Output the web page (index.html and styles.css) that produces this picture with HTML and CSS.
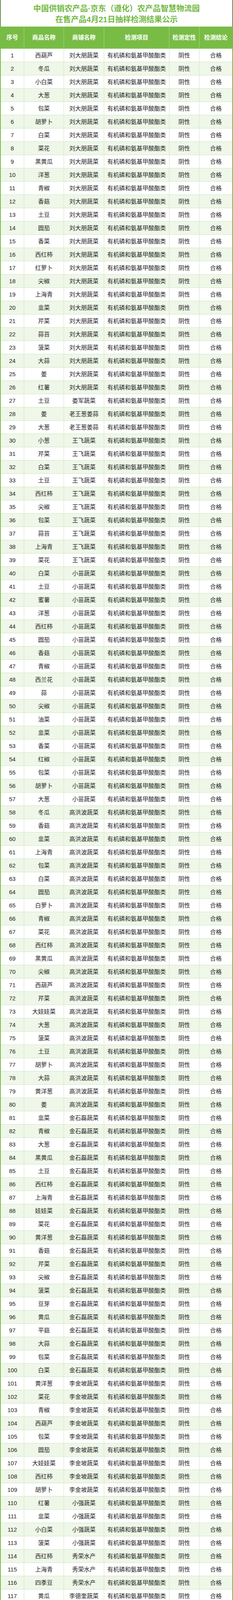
FILE: index.html
```html
<!DOCTYPE html>
<html lang="zh-CN">
<head>
<meta charset="utf-8">
<title>在售产品4月21日抽样检测结果公示</title>
<link rel="stylesheet" href="styles.css">
</head>
<body>
<div class="page">
  <div class="title">
    <div class="title-line">中国供销农产品·京东（遵化）农产品智慧物流园</div>
    <div class="title-line">在售产品4月21日抽样检测结果公示</div>
  </div>
  <div class="table">
    <div class="row head"><div class="c">序号</div><div class="c">商品名称</div><div class="c">商铺名称</div><div class="c">检测项目</div><div class="c">检测定性</div><div class="c">检测结论</div></div>
    <div class="body">
<div class="row"><div class="c">1</div><div class="c">西葫芦</div><div class="c">刘大朋蔬菜</div><div class="c">有机磷和氨基甲酸酯类</div><div class="c">阴性</div><div class="c">合格</div></div>
<div class="row"><div class="c">2</div><div class="c">冬瓜</div><div class="c">刘大朋蔬菜</div><div class="c">有机磷和氨基甲酸酯类</div><div class="c">阴性</div><div class="c">合格</div></div>
<div class="row"><div class="c">3</div><div class="c">小白菜</div><div class="c">刘大朋蔬菜</div><div class="c">有机磷和氨基甲酸酯类</div><div class="c">阴性</div><div class="c">合格</div></div>
<div class="row"><div class="c">4</div><div class="c">大葱</div><div class="c">刘大朋蔬菜</div><div class="c">有机磷和氨基甲酸酯类</div><div class="c">阴性</div><div class="c">合格</div></div>
<div class="row"><div class="c">5</div><div class="c">包菜</div><div class="c">刘大朋蔬菜</div><div class="c">有机磷和氨基甲酸酯类</div><div class="c">阴性</div><div class="c">合格</div></div>
<div class="row"><div class="c">6</div><div class="c">胡萝卜</div><div class="c">刘大朋蔬菜</div><div class="c">有机磷和氨基甲酸酯类</div><div class="c">阴性</div><div class="c">合格</div></div>
<div class="row"><div class="c">7</div><div class="c">白菜</div><div class="c">刘大朋蔬菜</div><div class="c">有机磷和氨基甲酸酯类</div><div class="c">阴性</div><div class="c">合格</div></div>
<div class="row"><div class="c">8</div><div class="c">菜花</div><div class="c">刘大朋蔬菜</div><div class="c">有机磷和氨基甲酸酯类</div><div class="c">阴性</div><div class="c">合格</div></div>
<div class="row"><div class="c">9</div><div class="c">黑黄瓜</div><div class="c">刘大朋蔬菜</div><div class="c">有机磷和氨基甲酸酯类</div><div class="c">阴性</div><div class="c">合格</div></div>
<div class="row"><div class="c">10</div><div class="c">洋葱</div><div class="c">刘大朋蔬菜</div><div class="c">有机磷和氨基甲酸酯类</div><div class="c">阴性</div><div class="c">合格</div></div>
<div class="row"><div class="c">11</div><div class="c">青椒</div><div class="c">刘大朋蔬菜</div><div class="c">有机磷和氨基甲酸酯类</div><div class="c">阴性</div><div class="c">合格</div></div>
<div class="row"><div class="c">12</div><div class="c">香菇</div><div class="c">刘大朋蔬菜</div><div class="c">有机磷和氨基甲酸酯类</div><div class="c">阴性</div><div class="c">合格</div></div>
<div class="row"><div class="c">13</div><div class="c">土豆</div><div class="c">刘大朋蔬菜</div><div class="c">有机磷和氨基甲酸酯类</div><div class="c">阴性</div><div class="c">合格</div></div>
<div class="row"><div class="c">14</div><div class="c">圆茄</div><div class="c">刘大朋蔬菜</div><div class="c">有机磷和氨基甲酸酯类</div><div class="c">阴性</div><div class="c">合格</div></div>
<div class="row"><div class="c">15</div><div class="c">香菜</div><div class="c">刘大朋蔬菜</div><div class="c">有机磷和氨基甲酸酯类</div><div class="c">阴性</div><div class="c">合格</div></div>
<div class="row"><div class="c">16</div><div class="c">西红柿</div><div class="c">刘大朋蔬菜</div><div class="c">有机磷和氨基甲酸酯类</div><div class="c">阴性</div><div class="c">合格</div></div>
<div class="row"><div class="c">17</div><div class="c">红萝卜</div><div class="c">刘大朋蔬菜</div><div class="c">有机磷和氨基甲酸酯类</div><div class="c">阴性</div><div class="c">合格</div></div>
<div class="row"><div class="c">18</div><div class="c">尖椒</div><div class="c">刘大朋蔬菜</div><div class="c">有机磷和氨基甲酸酯类</div><div class="c">阴性</div><div class="c">合格</div></div>
<div class="row"><div class="c">19</div><div class="c">上海青</div><div class="c">刘大朋蔬菜</div><div class="c">有机磷和氨基甲酸酯类</div><div class="c">阴性</div><div class="c">合格</div></div>
<div class="row"><div class="c">20</div><div class="c">韭菜</div><div class="c">刘大朋蔬菜</div><div class="c">有机磷和氨基甲酸酯类</div><div class="c">阴性</div><div class="c">合格</div></div>
<div class="row"><div class="c">21</div><div class="c">芹菜</div><div class="c">刘大朋蔬菜</div><div class="c">有机磷和氨基甲酸酯类</div><div class="c">阴性</div><div class="c">合格</div></div>
<div class="row"><div class="c">22</div><div class="c">蒜苔</div><div class="c">刘大朋蔬菜</div><div class="c">有机磷和氨基甲酸酯类</div><div class="c">阴性</div><div class="c">合格</div></div>
<div class="row"><div class="c">23</div><div class="c">菠菜</div><div class="c">刘大朋蔬菜</div><div class="c">有机磷和氨基甲酸酯类</div><div class="c">阴性</div><div class="c">合格</div></div>
<div class="row"><div class="c">24</div><div class="c">大蒜</div><div class="c">刘大朋蔬菜</div><div class="c">有机磷和氨基甲酸酯类</div><div class="c">阴性</div><div class="c">合格</div></div>
<div class="row"><div class="c">25</div><div class="c">姜</div><div class="c">刘大朋蔬菜</div><div class="c">有机磷和氨基甲酸酯类</div><div class="c">阴性</div><div class="c">合格</div></div>
<div class="row"><div class="c">26</div><div class="c">红薯</div><div class="c">刘大朋蔬菜</div><div class="c">有机磷和氨基甲酸酯类</div><div class="c">阴性</div><div class="c">合格</div></div>
<div class="row"><div class="c">27</div><div class="c">土豆</div><div class="c">娄军蔬菜</div><div class="c">有机磷和氨基甲酸酯类</div><div class="c">阴性</div><div class="c">合格</div></div>
<div class="row"><div class="c">28</div><div class="c">姜</div><div class="c">老王葱姜蒜</div><div class="c">有机磷和氨基甲酸酯类</div><div class="c">阴性</div><div class="c">合格</div></div>
<div class="row"><div class="c">29</div><div class="c">大葱</div><div class="c">老王葱姜蒜</div><div class="c">有机磷和氨基甲酸酯类</div><div class="c">阴性</div><div class="c">合格</div></div>
<div class="row"><div class="c">30</div><div class="c">小葱</div><div class="c">王飞蔬菜</div><div class="c">有机磷和氨基甲酸酯类</div><div class="c">阴性</div><div class="c">合格</div></div>
<div class="row"><div class="c">31</div><div class="c">芹菜</div><div class="c">王飞蔬菜</div><div class="c">有机磷和氨基甲酸酯类</div><div class="c">阴性</div><div class="c">合格</div></div>
<div class="row"><div class="c">32</div><div class="c">白菜</div><div class="c">王飞蔬菜</div><div class="c">有机磷和氨基甲酸酯类</div><div class="c">阴性</div><div class="c">合格</div></div>
<div class="row"><div class="c">33</div><div class="c">土豆</div><div class="c">王飞蔬菜</div><div class="c">有机磷和氨基甲酸酯类</div><div class="c">阴性</div><div class="c">合格</div></div>
<div class="row"><div class="c">34</div><div class="c">西红柿</div><div class="c">王飞蔬菜</div><div class="c">有机磷和氨基甲酸酯类</div><div class="c">阴性</div><div class="c">合格</div></div>
<div class="row"><div class="c">35</div><div class="c">尖椒</div><div class="c">王飞蔬菜</div><div class="c">有机磷和氨基甲酸酯类</div><div class="c">阴性</div><div class="c">合格</div></div>
<div class="row"><div class="c">36</div><div class="c">包菜</div><div class="c">王飞蔬菜</div><div class="c">有机磷和氨基甲酸酯类</div><div class="c">阴性</div><div class="c">合格</div></div>
<div class="row"><div class="c">37</div><div class="c">蒜苔</div><div class="c">王飞蔬菜</div><div class="c">有机磷和氨基甲酸酯类</div><div class="c">阴性</div><div class="c">合格</div></div>
<div class="row"><div class="c">38</div><div class="c">上海青</div><div class="c">王飞蔬菜</div><div class="c">有机磷和氨基甲酸酯类</div><div class="c">阴性</div><div class="c">合格</div></div>
<div class="row"><div class="c">39</div><div class="c">菜花</div><div class="c">王飞蔬菜</div><div class="c">有机磷和氨基甲酸酯类</div><div class="c">阴性</div><div class="c">合格</div></div>
<div class="row"><div class="c">40</div><div class="c">白菜</div><div class="c">小苗蔬菜</div><div class="c">有机磷和氨基甲酸酯类</div><div class="c">阴性</div><div class="c">合格</div></div>
<div class="row"><div class="c">41</div><div class="c">土豆</div><div class="c">小苗蔬菜</div><div class="c">有机磷和氨基甲酸酯类</div><div class="c">阴性</div><div class="c">合格</div></div>
<div class="row"><div class="c">42</div><div class="c">蜜薯</div><div class="c">小苗蔬菜</div><div class="c">有机磷和氨基甲酸酯类</div><div class="c">阴性</div><div class="c">合格</div></div>
<div class="row"><div class="c">43</div><div class="c">洋葱</div><div class="c">小苗蔬菜</div><div class="c">有机磷和氨基甲酸酯类</div><div class="c">阴性</div><div class="c">合格</div></div>
<div class="row"><div class="c">44</div><div class="c">西红柿</div><div class="c">小苗蔬菜</div><div class="c">有机磷和氨基甲酸酯类</div><div class="c">阴性</div><div class="c">合格</div></div>
<div class="row"><div class="c">45</div><div class="c">圆茄</div><div class="c">小苗蔬菜</div><div class="c">有机磷和氨基甲酸酯类</div><div class="c">阴性</div><div class="c">合格</div></div>
<div class="row"><div class="c">46</div><div class="c">香菇</div><div class="c">小苗蔬菜</div><div class="c">有机磷和氨基甲酸酯类</div><div class="c">阴性</div><div class="c">合格</div></div>
<div class="row"><div class="c">47</div><div class="c">青椒</div><div class="c">小苗蔬菜</div><div class="c">有机磷和氨基甲酸酯类</div><div class="c">阴性</div><div class="c">合格</div></div>
<div class="row"><div class="c">48</div><div class="c">西兰花</div><div class="c">小苗蔬菜</div><div class="c">有机磷和氨基甲酸酯类</div><div class="c">阴性</div><div class="c">合格</div></div>
<div class="row"><div class="c">49</div><div class="c">蒜</div><div class="c">小苗蔬菜</div><div class="c">有机磷和氨基甲酸酯类</div><div class="c">阴性</div><div class="c">合格</div></div>
<div class="row"><div class="c">50</div><div class="c">尖椒</div><div class="c">小苗蔬菜</div><div class="c">有机磷和氨基甲酸酯类</div><div class="c">阴性</div><div class="c">合格</div></div>
<div class="row"><div class="c">51</div><div class="c">油菜</div><div class="c">小苗蔬菜</div><div class="c">有机磷和氨基甲酸酯类</div><div class="c">阴性</div><div class="c">合格</div></div>
<div class="row"><div class="c">52</div><div class="c">韭菜</div><div class="c">小苗蔬菜</div><div class="c">有机磷和氨基甲酸酯类</div><div class="c">阴性</div><div class="c">合格</div></div>
<div class="row"><div class="c">53</div><div class="c">香菜</div><div class="c">小苗蔬菜</div><div class="c">有机磷和氨基甲酸酯类</div><div class="c">阴性</div><div class="c">合格</div></div>
<div class="row"><div class="c">54</div><div class="c">红椒</div><div class="c">小苗蔬菜</div><div class="c">有机磷和氨基甲酸酯类</div><div class="c">阴性</div><div class="c">合格</div></div>
<div class="row"><div class="c">55</div><div class="c">包菜</div><div class="c">小苗蔬菜</div><div class="c">有机磷和氨基甲酸酯类</div><div class="c">阴性</div><div class="c">合格</div></div>
<div class="row"><div class="c">56</div><div class="c">胡萝卜</div><div class="c">小苗蔬菜</div><div class="c">有机磷和氨基甲酸酯类</div><div class="c">阴性</div><div class="c">合格</div></div>
<div class="row"><div class="c">57</div><div class="c">大葱</div><div class="c">小苗蔬菜</div><div class="c">有机磷和氨基甲酸酯类</div><div class="c">阴性</div><div class="c">合格</div></div>
<div class="row"><div class="c">58</div><div class="c">冬瓜</div><div class="c">高洪波蔬菜</div><div class="c">有机磷和氨基甲酸酯类</div><div class="c">阴性</div><div class="c">合格</div></div>
<div class="row"><div class="c">59</div><div class="c">香菇</div><div class="c">高洪波蔬菜</div><div class="c">有机磷和氨基甲酸酯类</div><div class="c">阴性</div><div class="c">合格</div></div>
<div class="row"><div class="c">60</div><div class="c">韭菜</div><div class="c">高洪波蔬菜</div><div class="c">有机磷和氨基甲酸酯类</div><div class="c">阴性</div><div class="c">合格</div></div>
<div class="row"><div class="c">61</div><div class="c">上海青</div><div class="c">高洪波蔬菜</div><div class="c">有机磷和氨基甲酸酯类</div><div class="c">阴性</div><div class="c">合格</div></div>
<div class="row"><div class="c">62</div><div class="c">包菜</div><div class="c">高洪波蔬菜</div><div class="c">有机磷和氨基甲酸酯类</div><div class="c">阴性</div><div class="c">合格</div></div>
<div class="row"><div class="c">63</div><div class="c">白菜</div><div class="c">高洪波蔬菜</div><div class="c">有机磷和氨基甲酸酯类</div><div class="c">阴性</div><div class="c">合格</div></div>
<div class="row"><div class="c">64</div><div class="c">圆茄</div><div class="c">高洪波蔬菜</div><div class="c">有机磷和氨基甲酸酯类</div><div class="c">阴性</div><div class="c">合格</div></div>
<div class="row"><div class="c">65</div><div class="c">白萝卜</div><div class="c">高洪波蔬菜</div><div class="c">有机磷和氨基甲酸酯类</div><div class="c">阴性</div><div class="c">合格</div></div>
<div class="row"><div class="c">66</div><div class="c">青椒</div><div class="c">高洪波蔬菜</div><div class="c">有机磷和氨基甲酸酯类</div><div class="c">阴性</div><div class="c">合格</div></div>
<div class="row"><div class="c">67</div><div class="c">菜花</div><div class="c">高洪波蔬菜</div><div class="c">有机磷和氨基甲酸酯类</div><div class="c">阴性</div><div class="c">合格</div></div>
<div class="row"><div class="c">68</div><div class="c">西红柿</div><div class="c">高洪波蔬菜</div><div class="c">有机磷和氨基甲酸酯类</div><div class="c">阴性</div><div class="c">合格</div></div>
<div class="row"><div class="c">69</div><div class="c">黑黄瓜</div><div class="c">高洪波蔬菜</div><div class="c">有机磷和氨基甲酸酯类</div><div class="c">阴性</div><div class="c">合格</div></div>
<div class="row"><div class="c">70</div><div class="c">尖椒</div><div class="c">高洪波蔬菜</div><div class="c">有机磷和氨基甲酸酯类</div><div class="c">阴性</div><div class="c">合格</div></div>
<div class="row"><div class="c">71</div><div class="c">西葫芦</div><div class="c">高洪波蔬菜</div><div class="c">有机磷和氨基甲酸酯类</div><div class="c">阴性</div><div class="c">合格</div></div>
<div class="row"><div class="c">72</div><div class="c">芹菜</div><div class="c">高洪波蔬菜</div><div class="c">有机磷和氨基甲酸酯类</div><div class="c">阴性</div><div class="c">合格</div></div>
<div class="row"><div class="c">73</div><div class="c">大娃娃菜</div><div class="c">高洪波蔬菜</div><div class="c">有机磷和氨基甲酸酯类</div><div class="c">阴性</div><div class="c">合格</div></div>
<div class="row"><div class="c">74</div><div class="c">大葱</div><div class="c">高洪波蔬菜</div><div class="c">有机磷和氨基甲酸酯类</div><div class="c">阴性</div><div class="c">合格</div></div>
<div class="row"><div class="c">75</div><div class="c">菠菜</div><div class="c">高洪波蔬菜</div><div class="c">有机磷和氨基甲酸酯类</div><div class="c">阴性</div><div class="c">合格</div></div>
<div class="row"><div class="c">76</div><div class="c">土豆</div><div class="c">高洪波蔬菜</div><div class="c">有机磷和氨基甲酸酯类</div><div class="c">阴性</div><div class="c">合格</div></div>
<div class="row"><div class="c">77</div><div class="c">胡萝卜</div><div class="c">高洪波蔬菜</div><div class="c">有机磷和氨基甲酸酯类</div><div class="c">阴性</div><div class="c">合格</div></div>
<div class="row"><div class="c">78</div><div class="c">大蒜</div><div class="c">高洪波蔬菜</div><div class="c">有机磷和氨基甲酸酯类</div><div class="c">阴性</div><div class="c">合格</div></div>
<div class="row"><div class="c">79</div><div class="c">黄洋葱</div><div class="c">高洪波蔬菜</div><div class="c">有机磷和氨基甲酸酯类</div><div class="c">阴性</div><div class="c">合格</div></div>
<div class="row"><div class="c">80</div><div class="c">姜</div><div class="c">高洪波蔬菜</div><div class="c">有机磷和氨基甲酸酯类</div><div class="c">阴性</div><div class="c">合格</div></div>
<div class="row"><div class="c">81</div><div class="c">韭菜</div><div class="c">金石磊蔬菜</div><div class="c">有机磷和氨基甲酸酯类</div><div class="c">阴性</div><div class="c">合格</div></div>
<div class="row"><div class="c">82</div><div class="c">青椒</div><div class="c">金石磊蔬菜</div><div class="c">有机磷和氨基甲酸酯类</div><div class="c">阴性</div><div class="c">合格</div></div>
<div class="row"><div class="c">83</div><div class="c">大葱</div><div class="c">金石磊蔬菜</div><div class="c">有机磷和氨基甲酸酯类</div><div class="c">阴性</div><div class="c">合格</div></div>
<div class="row"><div class="c">84</div><div class="c">黑黄瓜</div><div class="c">金石磊蔬菜</div><div class="c">有机磷和氨基甲酸酯类</div><div class="c">阴性</div><div class="c">合格</div></div>
<div class="row"><div class="c">85</div><div class="c">土豆</div><div class="c">金石磊蔬菜</div><div class="c">有机磷和氨基甲酸酯类</div><div class="c">阴性</div><div class="c">合格</div></div>
<div class="row"><div class="c">86</div><div class="c">西红柿</div><div class="c">金石磊蔬菜</div><div class="c">有机磷和氨基甲酸酯类</div><div class="c">阴性</div><div class="c">合格</div></div>
<div class="row"><div class="c">87</div><div class="c">上海青</div><div class="c">金石磊蔬菜</div><div class="c">有机磷和氨基甲酸酯类</div><div class="c">阴性</div><div class="c">合格</div></div>
<div class="row"><div class="c">88</div><div class="c">娃娃菜</div><div class="c">金石磊蔬菜</div><div class="c">有机磷和氨基甲酸酯类</div><div class="c">阴性</div><div class="c">合格</div></div>
<div class="row"><div class="c">89</div><div class="c">菜花</div><div class="c">金石磊蔬菜</div><div class="c">有机磷和氨基甲酸酯类</div><div class="c">阴性</div><div class="c">合格</div></div>
<div class="row"><div class="c">90</div><div class="c">黄洋葱</div><div class="c">金石磊蔬菜</div><div class="c">有机磷和氨基甲酸酯类</div><div class="c">阴性</div><div class="c">合格</div></div>
<div class="row"><div class="c">91</div><div class="c">香菇</div><div class="c">金石磊蔬菜</div><div class="c">有机磷和氨基甲酸酯类</div><div class="c">阴性</div><div class="c">合格</div></div>
<div class="row"><div class="c">92</div><div class="c">芹菜</div><div class="c">金石磊蔬菜</div><div class="c">有机磷和氨基甲酸酯类</div><div class="c">阴性</div><div class="c">合格</div></div>
<div class="row"><div class="c">93</div><div class="c">尖椒</div><div class="c">金石磊蔬菜</div><div class="c">有机磷和氨基甲酸酯类</div><div class="c">阴性</div><div class="c">合格</div></div>
<div class="row"><div class="c">94</div><div class="c">菠菜</div><div class="c">金石磊蔬菜</div><div class="c">有机磷和氨基甲酸酯类</div><div class="c">阴性</div><div class="c">合格</div></div>
<div class="row"><div class="c">95</div><div class="c">豆芽</div><div class="c">金石磊蔬菜</div><div class="c">有机磷和氨基甲酸酯类</div><div class="c">阴性</div><div class="c">合格</div></div>
<div class="row"><div class="c">96</div><div class="c">黄瓜</div><div class="c">金石磊蔬菜</div><div class="c">有机磷和氨基甲酸酯类</div><div class="c">阴性</div><div class="c">合格</div></div>
<div class="row"><div class="c">97</div><div class="c">平菇</div><div class="c">金石磊蔬菜</div><div class="c">有机磷和氨基甲酸酯类</div><div class="c">阴性</div><div class="c">合格</div></div>
<div class="row"><div class="c">98</div><div class="c">大蒜</div><div class="c">金石磊蔬菜</div><div class="c">有机磷和氨基甲酸酯类</div><div class="c">阴性</div><div class="c">合格</div></div>
<div class="row"><div class="c">99</div><div class="c">包菜</div><div class="c">金石磊蔬菜</div><div class="c">有机磷和氨基甲酸酯类</div><div class="c">阴性</div><div class="c">合格</div></div>
<div class="row"><div class="c">100</div><div class="c">白菜</div><div class="c">金石磊蔬菜</div><div class="c">有机磷和氨基甲酸酯类</div><div class="c">阴性</div><div class="c">合格</div></div>
<div class="row"><div class="c">101</div><div class="c">黄洋葱</div><div class="c">李金坡蔬菜</div><div class="c">有机磷和氨基甲酸酯类</div><div class="c">阴性</div><div class="c">合格</div></div>
<div class="row"><div class="c">102</div><div class="c">菜花</div><div class="c">李金坡蔬菜</div><div class="c">有机磷和氨基甲酸酯类</div><div class="c">阴性</div><div class="c">合格</div></div>
<div class="row"><div class="c">103</div><div class="c">青椒</div><div class="c">李金坡蔬菜</div><div class="c">有机磷和氨基甲酸酯类</div><div class="c">阴性</div><div class="c">合格</div></div>
<div class="row"><div class="c">104</div><div class="c">西葫芦</div><div class="c">李金坡蔬菜</div><div class="c">有机磷和氨基甲酸酯类</div><div class="c">阴性</div><div class="c">合格</div></div>
<div class="row"><div class="c">105</div><div class="c">包菜</div><div class="c">李金坡蔬菜</div><div class="c">有机磷和氨基甲酸酯类</div><div class="c">阴性</div><div class="c">合格</div></div>
<div class="row"><div class="c">106</div><div class="c">圆茄</div><div class="c">李金坡蔬菜</div><div class="c">有机磷和氨基甲酸酯类</div><div class="c">阴性</div><div class="c">合格</div></div>
<div class="row"><div class="c">107</div><div class="c">大娃娃菜</div><div class="c">李金坡蔬菜</div><div class="c">有机磷和氨基甲酸酯类</div><div class="c">阴性</div><div class="c">合格</div></div>
<div class="row"><div class="c">108</div><div class="c">西红柿</div><div class="c">李金坡蔬菜</div><div class="c">有机磷和氨基甲酸酯类</div><div class="c">阴性</div><div class="c">合格</div></div>
<div class="row"><div class="c">109</div><div class="c">胡萝卜</div><div class="c">李金坡蔬菜</div><div class="c">有机磷和氨基甲酸酯类</div><div class="c">阴性</div><div class="c">合格</div></div>
<div class="row"><div class="c">110</div><div class="c">红薯</div><div class="c">小强蔬菜</div><div class="c">有机磷和氨基甲酸酯类</div><div class="c">阴性</div><div class="c">合格</div></div>
<div class="row"><div class="c">111</div><div class="c">韭菜</div><div class="c">小强蔬菜</div><div class="c">有机磷和氨基甲酸酯类</div><div class="c">阴性</div><div class="c">合格</div></div>
<div class="row"><div class="c">112</div><div class="c">小白菜</div><div class="c">小强蔬菜</div><div class="c">有机磷和氨基甲酸酯类</div><div class="c">阴性</div><div class="c">合格</div></div>
<div class="row"><div class="c">113</div><div class="c">菠菜</div><div class="c">小强蔬菜</div><div class="c">有机磷和氨基甲酸酯类</div><div class="c">阴性</div><div class="c">合格</div></div>
<div class="row"><div class="c">114</div><div class="c">西红柿</div><div class="c">秀荣水产</div><div class="c">有机磷和氨基甲酸酯类</div><div class="c">阴性</div><div class="c">合格</div></div>
<div class="row"><div class="c">115</div><div class="c">上海青</div><div class="c">秀荣水产</div><div class="c">有机磷和氨基甲酸酯类</div><div class="c">阴性</div><div class="c">合格</div></div>
<div class="row"><div class="c">116</div><div class="c">四季豆</div><div class="c">秀荣水产</div><div class="c">有机磷和氨基甲酸酯类</div><div class="c">阴性</div><div class="c">合格</div></div>
<div class="row"><div class="c">117</div><div class="c">黄瓜</div><div class="c">李德奎蔬菜</div><div class="c">有机磷和氨基甲酸酯类</div><div class="c">阴性</div><div class="c">合格</div></div>
<div class="row"><div class="c">118</div><div class="c">雪花梨</div><div class="c">宏伟水果</div><div class="c">有机磷和氨基甲酸酯类</div><div class="c">阴性</div><div class="c">合格</div></div>
<div class="row"><div class="c">119</div><div class="c">香蕉</div><div class="c">宏伟水果</div><div class="c">有机磷和氨基甲酸酯类</div><div class="c">阴性</div><div class="c">合格</div></div>
<div class="row"><div class="c">120</div><div class="c">沃柑</div><div class="c">宏伟水果</div><div class="c">有机磷和氨基甲酸酯类</div><div class="c">阴性</div><div class="c">合格</div></div>
<div class="row"><div class="c">121</div><div class="c">苹果</div><div class="c">徐长月水果</div><div class="c">有机磷和氨基甲酸酯类</div><div class="c">阴性</div><div class="c">合格</div></div>
<div class="row"><div class="c">122</div><div class="c">香蕉</div><div class="c">徐长月水果</div><div class="c">有机磷和氨基甲酸酯类</div><div class="c">阴性</div><div class="c">合格</div></div>
<div class="row"><div class="c">123</div><div class="c">沃柑</div><div class="c">徐长月水果</div><div class="c">有机磷和氨基甲酸酯类</div><div class="c">阴性</div><div class="c">合格</div></div>
<div class="row"><div class="c">124</div><div class="c">花盖梨</div><div class="c">徐长月水果</div><div class="c">有机磷和氨基甲酸酯类</div><div class="c">阴性</div><div class="c">合格</div></div>
<div class="row"><div class="c">125</div><div class="c">草莓</div><div class="c">徐长月水果</div><div class="c">有机磷和氨基甲酸酯类</div><div class="c">阴性</div><div class="c">合格</div></div>
<div class="row"><div class="c">126</div><div class="c">黄柿子</div><div class="c">徐长月水果</div><div class="c">有机磷和氨基甲酸酯类</div><div class="c">阴性</div><div class="c">合格</div></div>
<div class="row"><div class="c">127</div><div class="c">白菜</div><div class="c">小云蔬菜</div><div class="c">有机磷和氨基甲酸酯类</div><div class="c">阴性</div><div class="c">合格</div></div>
<div class="row"><div class="c">128</div><div class="c">菜花</div><div class="c">小云蔬菜</div><div class="c">有机磷和氨基甲酸酯类</div><div class="c">阴性</div><div class="c">合格</div></div>
<div class="row"><div class="c">129</div><div class="c">红萝卜</div><div class="c">小云蔬菜</div><div class="c">有机磷和氨基甲酸酯类</div><div class="c">阴性</div><div class="c">合格</div></div>
<div class="row"><div class="c">130</div><div class="c">菠菜</div><div class="c">小云蔬菜</div><div class="c">有机磷和氨基甲酸酯类</div><div class="c">阴性</div><div class="c">合格</div></div>
<div class="row"><div class="c">131</div><div class="c">黑黄瓜</div><div class="c">小云蔬菜</div><div class="c">有机磷和氨基甲酸酯类</div><div class="c">阴性</div><div class="c">合格</div></div>
<div class="row"><div class="c">132</div><div class="c">黄洋葱</div><div class="c">小云蔬菜</div><div class="c">有机磷和氨基甲酸酯类</div><div class="c">阴性</div><div class="c">合格</div></div>
<div class="row"><div class="c">133</div><div class="c">红薯</div><div class="c">小云蔬菜</div><div class="c">有机磷和氨基甲酸酯类</div><div class="c">阴性</div><div class="c">合格</div></div>
<div class="row"><div class="c">134</div><div class="c">西葫芦</div><div class="c">小云蔬菜</div><div class="c">有机磷和氨基甲酸酯类</div><div class="c">阴性</div><div class="c">合格</div></div>
<div class="row"><div class="c">135</div><div class="c">香菇</div><div class="c">小云蔬菜</div><div class="c">有机磷和氨基甲酸酯类</div><div class="c">阴性</div><div class="c">合格</div></div>
<div class="row"><div class="c">136</div><div class="c">尖椒</div><div class="c">小云蔬菜</div><div class="c">有机磷和氨基甲酸酯类</div><div class="c">阴性</div><div class="c">合格</div></div>
<div class="row"><div class="c">137</div><div class="c">西红柿</div><div class="c">小云蔬菜</div><div class="c">有机磷和氨基甲酸酯类</div><div class="c">阴性</div><div class="c">合格</div></div>
<div class="row"><div class="c">138</div><div class="c">青椒</div><div class="c">小云蔬菜</div><div class="c">有机磷和氨基甲酸酯类</div><div class="c">阴性</div><div class="c">合格</div></div>
<div class="row"><div class="c">139</div><div class="c">胡萝卜</div><div class="c">小云蔬菜</div><div class="c">有机磷和氨基甲酸酯类</div><div class="c">阴性</div><div class="c">合格</div></div>
<div class="row"><div class="c">140</div><div class="c">大葱</div><div class="c">小云蔬菜</div><div class="c">有机磷和氨基甲酸酯类</div><div class="c">阴性</div><div class="c">合格</div></div>
<div class="row"><div class="c">141</div><div class="c">冬瓜</div><div class="c">小云蔬菜</div><div class="c">有机磷和氨基甲酸酯类</div><div class="c">阴性</div><div class="c">合格</div></div>
<div class="row"><div class="c">142</div><div class="c">大娃娃菜</div><div class="c">小云蔬菜</div><div class="c">有机磷和氨基甲酸酯类</div><div class="c">阴性</div><div class="c">合格</div></div>
<div class="row"><div class="c">143</div><div class="c">大蒜</div><div class="c">小云蔬菜</div><div class="c">有机磷和氨基甲酸酯类</div><div class="c">阴性</div><div class="c">合格</div></div>
<div class="row"><div class="c">144</div><div class="c">上海青</div><div class="c">小云蔬菜</div><div class="c">有机磷和氨基甲酸酯类</div><div class="c">阴性</div><div class="c">合格</div></div>
<div class="row"><div class="c">145</div><div class="c">包菜</div><div class="c">小云蔬菜</div><div class="c">有机磷和氨基甲酸酯类</div><div class="c">阴性</div><div class="c">合格</div></div>
<div class="row"><div class="c">146</div><div class="c">豆芽</div><div class="c">小云蔬菜</div><div class="c">有机磷和氨基甲酸酯类</div><div class="c">阴性</div><div class="c">合格</div></div>
<div class="row"><div class="c">147</div><div class="c">姜</div><div class="c">小云蔬菜</div><div class="c">有机磷和氨基甲酸酯类</div><div class="c">阴性</div><div class="c">合格</div></div>
<div class="row"><div class="c">148</div><div class="c">蒜苔</div><div class="c">小云蔬菜</div><div class="c">有机磷和氨基甲酸酯类</div><div class="c">阴性</div><div class="c">合格</div></div>
<div class="row"><div class="c">149</div><div class="c">土豆</div><div class="c">小云蔬菜</div><div class="c">有机磷和氨基甲酸酯类</div><div class="c">阴性</div><div class="c">合格</div></div>
<div class="row"><div class="c">150</div><div class="c">芹菜</div><div class="c">小云蔬菜</div><div class="c">有机磷和氨基甲酸酯类</div><div class="c">阴性</div><div class="c">合格</div></div>
<div class="row"><div class="c">151</div><div class="c">菜花</div><div class="c">张成蔬菜</div><div class="c">有机磷和氨基甲酸酯类</div><div class="c">阴性</div><div class="c">合格</div></div>
<div class="row"><div class="c">152</div><div class="c">西红柿</div><div class="c">张成蔬菜</div><div class="c">有机磷和氨基甲酸酯类</div><div class="c">阴性</div><div class="c">合格</div></div>
<div class="row"><div class="c">153</div><div class="c">小葱</div><div class="c">张成蔬菜</div><div class="c">有机磷和氨基甲酸酯类</div><div class="c">阴性</div><div class="c">合格</div></div>
<div class="row"><div class="c">154</div><div class="c">西兰花</div><div class="c">张成蔬菜</div><div class="c">有机磷和氨基甲酸酯类</div><div class="c">阴性</div><div class="c">合格</div></div>
<div class="row"><div class="c">155</div><div class="c">大娃娃菜</div><div class="c">张成蔬菜</div><div class="c">有机磷和氨基甲酸酯类</div><div class="c">阴性</div><div class="c">合格</div></div>
<div class="row"><div class="c">156</div><div class="c">杏鲍菇</div><div class="c">张成蔬菜</div><div class="c">有机磷和氨基甲酸酯类</div><div class="c">阴性</div><div class="c">合格</div></div>
<div class="row"><div class="c">157</div><div class="c">上海青</div><div class="c">张成蔬菜</div><div class="c">有机磷和氨基甲酸酯类</div><div class="c">阴性</div><div class="c">合格</div></div>
<div class="row"><div class="c">158</div><div class="c">胡萝卜</div><div class="c">张成蔬菜</div><div class="c">有机磷和氨基甲酸酯类</div><div class="c">阴性</div><div class="c">合格</div></div>
<div class="row"><div class="c">159</div><div class="c">蓝莓</div><div class="c">佳琪水果</div><div class="c">有机磷和氨基甲酸酯类</div><div class="c">阴性</div><div class="c">合格</div></div>
<div class="row"><div class="c">160</div><div class="c">香蕉</div><div class="c">佳琪水果</div><div class="c">有机磷和氨基甲酸酯类</div><div class="c">阴性</div><div class="c">合格</div></div>
<div class="row"><div class="c">161</div><div class="c">沃柑</div><div class="c">佳琪水果</div><div class="c">有机磷和氨基甲酸酯类</div><div class="c">阴性</div><div class="c">合格</div></div>
<div class="row"><div class="c">162</div><div class="c">苹果</div><div class="c">佳琪水果</div><div class="c">有机磷和氨基甲酸酯类</div><div class="c">阴性</div><div class="c">合格</div></div>
<div class="row"><div class="c">163</div><div class="c">哈密瓜</div><div class="c">佳琪水果</div><div class="c">有机磷和氨基甲酸酯类</div><div class="c">阴性</div><div class="c">合格</div></div>
<div class="row"><div class="c">164</div><div class="c">鸡蛋</div><div class="c">黄涛禽蛋</div><div class="c">喹诺酮类</div><div class="c">阴性</div><div class="c">合格</div></div>
    </div>
  </div>
  <div class="notes">
    <p class="note">1、结果判定：当酶抑制率≥50%时，表示蔬果中有机磷和氨基甲酸酯类农药残留高于检测限，为农残超标。酶抑制率&lt;50%为农残不超标。</p>
    <p class="note">2、快检结果仅供遵化中合农产品市场有限公司内部使用。</p>
    <p class="note">3、快检结果仅供参考，不具备法律效应。</p>
  </div>
</div>
</body>
</html>
```

FILE: styles.css
```css
html, body {
  margin: 0;
  padding: 0;
  background: #ffffff;
}

body {
  font-family: "Liberation Sans", "Noto Sans CJK SC", sans-serif;
  color: #222222;
  font-size: 15px;
  line-height: 20px;
  text-autospace: no-autospace;
}

.page {
  width: 597px;
  box-sizing: border-box;
  border-left: 2px solid #78bc45;
  border-right: 2px solid #78bc45;
  border-bottom: 2px solid #78bc45;
}

.title {
  height: 68px;
  margin: 0 -2px;
  overflow: hidden;
  box-sizing: border-box;
  padding-top: 8px;
  border-left: 1px solid #555555;
  border-right: 1px solid #555555;
  text-align: center;
  color: #72b842;
  font-weight: bold;
  font-size: 20px;
  line-height: 28px;
}

.title-line {
  height: 28px;
  white-space: nowrap;
}

.row {
  display: grid;
  grid-template-columns: 60px 102px 103px 167px 77px 1fr;
  grid-template-rows: 100%;
  height: 34px;
  overflow: hidden;
  box-sizing: border-box;
  border-bottom: 1px solid #cfe5bf;
}

.c {
  display: flex;
  align-items: center;
  justify-content: center;
  min-height: 0;
  border-right: 1px solid #cfe5bf;
  white-space: nowrap;
  line-height: 20px;
}

.c:last-child {
  border-right: none;
}

.row.head {
  height: 57px;
  background: #78bc45;
  color: #ffffff;
  font-weight: bold;
  border-bottom: 1px solid #a9d48a;
}

.row.head .c {
  border-right-color: #a9d48a;
}

.row.head .c:last-child {
  border-right: none;
}

.body .row:nth-child(even) {
  background: #eff7e9;
}

.notes {
  height: 166px;
  box-sizing: border-box;
  overflow: hidden;
  padding: 40px 0 0 3px;
}

.note {
  margin: 0;
  line-height: 22px;
}
```
